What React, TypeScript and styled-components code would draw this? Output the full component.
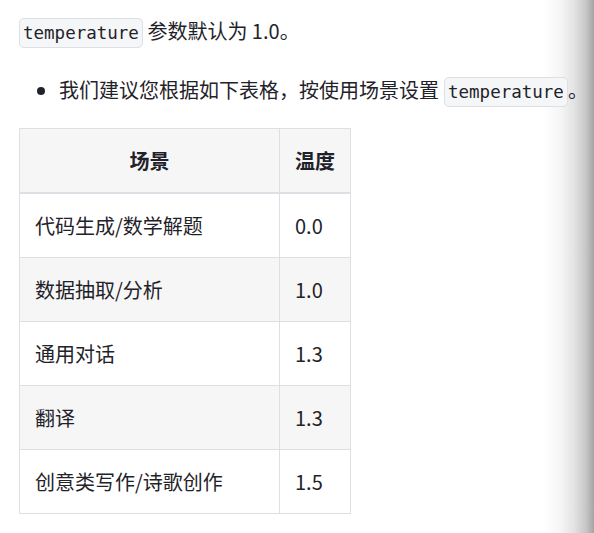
import * as React from 'react';
import styled, { createGlobalStyle } from 'styled-components';

const GlobalStyle = createGlobalStyle`
  html, body {
    margin: 0;
    padding: 0;
    background: #ffffff;
  }
  body {
    font-family: "Noto Sans CJK SC", "Noto Sans", sans-serif;
    font-size: 20px;
    color: #1f2329;
  }
`;

const Page = styled.div`
  min-height: 533px;
  width: 594px;
  box-sizing: border-box;
  padding: 15px 0 0 19px;
  line-height: 32px;
  background: linear-gradient(
    to right,
    #ffffff 0px,
    #ffffff 542px,
    #f6f6f6 560px,
    #e3e3e3 574px,
    #c6c6c6 586px,
    #a4a4a4 594px
  );
`;

const Para = styled.p`
  margin: 0 0 25px 0;
`;

const Code = styled.code`
  font-family: "DejaVu Sans Mono", "Liberation Mono", monospace;
  font-size: 17.5px;
  background: #f5f6f8;
  border: 1px solid #dcdfe3;
  border-radius: 5px;
  padding: 4px 3px;
`;

const TrailingCode = styled(Code)`
  margin-left: 5px;
`;

const BulletList = styled.ul`
  margin: 0 0 20px 0;
  padding-left: 40px;
  list-style: disc;
  white-space: nowrap;
`;

const Table = styled.table`
  border-collapse: collapse;
  border: 1px solid #dcdfe3;
  background: #ffffff;
`;

const HeadCell = styled.th<{ $wide?: boolean }>`
  background: #f6f6f6;
  font-weight: 700;
  text-align: center;
  padding: 16px 15px;
  border: 1px solid #dcdfe3;
  border-bottom: 2px solid #dcdfe3;
  line-height: 31px;
  width: ${(p) => (p.$wide ? '229px' : 'auto')};
`;

const Row = styled.tr<{ $striped: boolean }>`
  background: ${(p) => (p.$striped ? '#f6f6f6' : '#ffffff')};
`;

const Cell = styled.td`
  padding: 16px 15px;
  border: 1px solid #dcdfe3;
  line-height: 31px;
`;

const rows: [string, string][] = [
  ['代码生成/数学解题', '0.0'],
  ['数据抽取/分析', '1.0'],
  ['通用对话', '1.3'],
  ['翻译', '1.3'],
  ['创意类写作/诗歌创作', '1.5'],
];

export default function App() {
  return (
    <>
      <GlobalStyle />
      <Page>
        <Para>
          <Code>temperature</Code> 参数默认为 1.0。
        </Para>
        <BulletList>
          <li>
            我们建议您根据如下表格，按使用场景设置
            <TrailingCode>temperature</TrailingCode>。
          </li>
        </BulletList>
        <Table>
          <thead>
            <tr>
              <HeadCell $wide>场景</HeadCell>
              <HeadCell>温度</HeadCell>
            </tr>
          </thead>
          <tbody>
            {rows.map(([scene, temp], i) => (
              <Row key={scene} $striped={i % 2 === 1}>
                <Cell>{scene}</Cell>
                <Cell>{temp}</Cell>
              </Row>
            ))}
          </tbody>
        </Table>
      </Page>
    </>
  );
}
